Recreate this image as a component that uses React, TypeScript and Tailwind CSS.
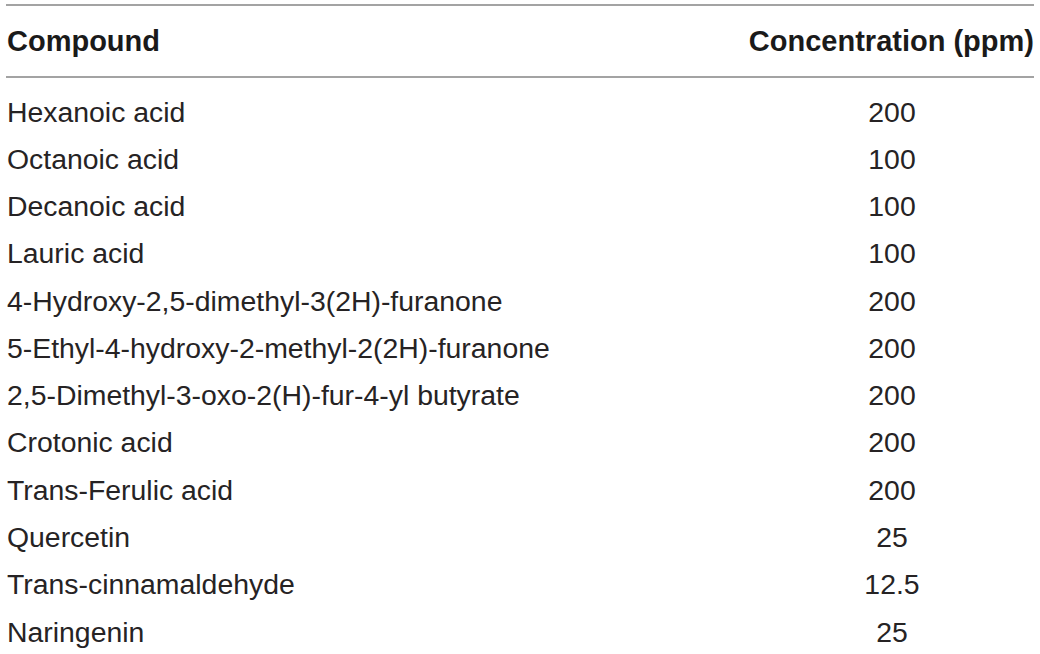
import React from 'react';

const ROWS: [string, string][] = [
  ['Hexanoic acid', '200'],
  ['Octanoic acid', '100'],
  ['Decanoic acid', '100'],
  ['Lauric acid', '100'],
  ['4-Hydroxy-2,5-dimethyl-3(2H)-furanone', '200'],
  ['5-Ethyl-4-hydroxy-2-methyl-2(2H)-furanone', '200'],
  ['2,5-Dimethyl-3-oxo-2(H)-fur-4-yl butyrate', '200'],
  ['Crotonic acid', '200'],
  ['Trans-Ferulic acid', '200'],
  ['Quercetin', '25'],
  ['Trans-cinnamaldehyde', '12.5'],
  ['Naringenin', '25'],
];

export default function App() {
  return (
    <div className="w-[1040px] h-[654px] overflow-hidden bg-white text-[#262324] font-['Liberation_Sans',Arial,sans-serif] text-[28.4px] leading-[32px]">
      <div className="mx-[6px] mt-[4px] border-t-2 border-[#a3a3a3]">
        {/* Header */}
        <div className="flex items-start pt-[19px] pb-[19px] border-b-2 border-[#a3a3a3] font-bold text-[29px] text-[#1a1a1a] whitespace-nowrap">
          <div className="flex-1 pl-[1px]">Compound</div>
          <div className="w-[286px] text-right">Concentration (ppm)</div>
        </div>

        {/* Body */}
        <div className="pt-[10px]">
          {ROWS.map(([name, value]) => (
            <div key={name} className="flex items-center h-[47.27px] whitespace-nowrap">
              <div className="flex-1 pl-[1px]">{name}</div>
              <div className="w-[286px] text-center pl-[2px]">{value}</div>
            </div>
          ))}
        </div>
      </div>
    </div>
  );
}
